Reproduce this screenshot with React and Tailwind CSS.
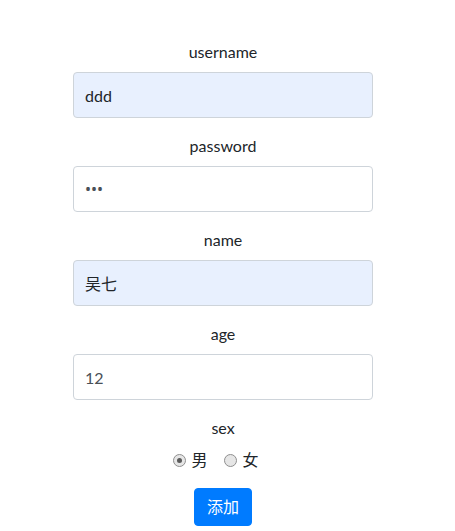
import React from 'react';

function Field({ label, value, filled, type = 'text', muted }) {
    return (
        <div className="flex flex-col items-center mb-4">
            <label className="h-6 leading-6 mb-2 text-[16px] text-[#212529]">{label}</label>
            <input
                type={type}
                defaultValue={value}
                style={type === 'password' ? { fontFamily: '"Noto Sans", sans-serif' } : undefined}
                className={`w-[300px] h-[46px] px-[11px] border border-[#ced4da] rounded-[4px] text-[16px] outline-none ${filled ? 'bg-[#e8f0fe] text-[#212529]' : 'bg-white'} ${muted ? 'text-[#495057]' : 'text-[#212529]'}`}
            />
        </div>
    );
}

function Radio({ checked }) {
    return (
        <span className="w-[13px] h-[13px] rounded-full border border-[#8f8f8f] bg-[#e6e6e6] flex items-center justify-center">
            {checked && <span className="w-[5px] h-[5px] rounded-full bg-[#5a5a5a]" />}
        </span>
    );
}

export default function App() {
    return (
        <div className="w-[446px] pt-10 flex flex-col items-center bg-white" style={{ fontFamily: 'Lato, "Noto Sans CJK SC", sans-serif' }}>
            <Field label="username" value="ddd" filled />
            <Field label="password" value="ddd" type="password" muted />
            <Field label="name" value="吴七" filled />
            <Field label="age" value="12" muted />
            <div className="flex flex-col items-center mb-4">
                <label className="h-6 leading-6 mb-2 text-[16px] text-[#212529]">sex</label>
                <div className="h-6 flex items-center text-[16px] text-[#212529] -ml-[14px]">
                    <Radio checked />
                    <span className="ml-[5px]">男</span>
                    <span className="ml-4"><Radio /></span>
                    <span className="ml-[6px]">女</span>
                </div>
            </div>
            <button className="h-[38px] px-3 rounded-[4px] bg-[#007bff] border border-[#007bff] text-white text-[16px] leading-6">添加</button>
        </div>
    );
}
